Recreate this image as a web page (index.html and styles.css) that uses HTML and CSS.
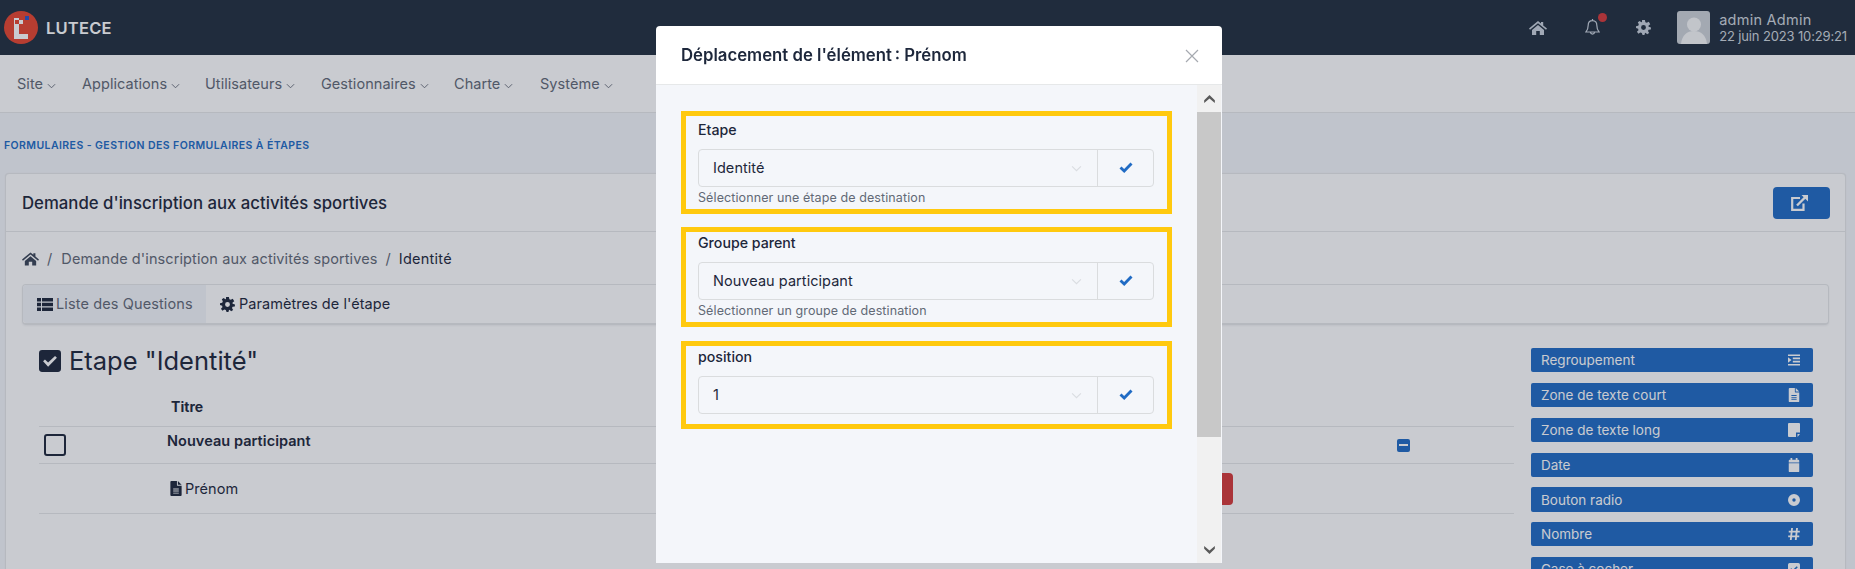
FILE: index.html
```html
<!DOCTYPE html>
<html lang="fr">
<head>
<meta charset="utf-8">
<title>Lutece</title>
<link rel="stylesheet" href="styles.css">
</head>
<body>
<svg class="defs" width="0" height="0" aria-hidden="true">
  <symbol id="i-home" viewBox="0 0 18 14"><path d="M9 0 L12 2.5 V1 H14.2 V4.4 L18 7.6 L17 8.8 L9 2.2 L1 8.8 L0 7.6 Z M3 9 L9 4 L15 9 V14 H10.8 V10 H7.2 V14 H3 Z" fill="currentColor"/></symbol>
  <symbol id="i-gear" viewBox="0 0 16 16"><path fill-rule="evenodd" d="M6.5 0 H9.5 L10 2.3 L11.5 3 L13.6 1.9 L15.2 4.4 L13.4 5.9 V7.2 L16 8 L15.8 10.2 L13.4 10.4 L12.8 11.8 L14 13.8 L11.9 15.2 L10.2 13.6 L9.5 14 L9 16 H7 L6.2 13.8 L4.6 13.4 L2.6 14.6 L1 12.5 L2.6 10.8 L2.3 9.4 L0 8.6 V6.6 L2.4 6 L3 4.6 L1.9 2.4 L4 1 L5.6 2.4 L6.3 2.2 Z M8 5.4 A2.6 2.6 0 1 0 8 10.6 A2.6 2.6 0 1 0 8 5.4 Z" fill="currentColor"/></symbol>
  <symbol id="i-bell" viewBox="0 0 16 20"><path d="M8 1 V2.6 M8 2.6 C4.8 2.6 3.4 5 3.4 7.6 C3.4 11.6 2.6 13 1 14.8 H15 C13.4 13 12.6 11.6 12.6 7.6 C12.6 5 11.2 2.6 8 2.6 Z M5.6 15 A2.5 2.8 0 0 0 10.4 15" fill="none" stroke="currentColor" stroke-width="1.3"/></symbol>
  <symbol id="i-ext" viewBox="0 0 18 16"><path d="M9 3 H1.2 V14.8 H12.5 V8.5" fill="none" stroke="currentColor" stroke-width="2.2"/><path d="M6 10.5 L14 2.5" fill="none" stroke="currentColor" stroke-width="2.4"/><path d="M10.5 0 H17 V6.5 Z" fill="currentColor"/></symbol>
  <symbol id="i-list" viewBox="0 0 16 13"><path d="M0 0 H4 V3.6 H0 Z M5 0 H16 V3.6 H5 Z M0 4.7 H4 V8.3 H0 Z M5 4.7 H16 V8.3 H5 Z M0 9.4 H4 V13 H0 Z M5 9.4 H16 V13 H5 Z" fill="currentColor"/></symbol>
  <symbol id="i-file" viewBox="0 0 12 16"><path fill-rule="evenodd" d="M0 1 A1 1 0 0 1 1 0 H7 V4.5 A.5.5 0 0 0 7.5 5 H12 V15 A1 1 0 0 1 11 16 H1 A1 1 0 0 1 0 15 Z M8 0 L12 4 H8 Z M3 8 V9 H9 V8 Z M3 10.2 V11.2 H9 V10.2 Z M3 12.4 V13.4 H9 V12.4 Z" fill="currentColor"/></symbol>
  <symbol id="i-indent" viewBox="0 0 15 14"><path d="M0 0 H15 V2 H0 Z M6 4 H15 V6 H6 Z M6 8 H15 V10 H6 Z M0 12 H15 V14 H0 Z M0 3.6 L4.4 7 L0 10.4 Z" fill="currentColor"/></symbol>
  <symbol id="i-note" viewBox="0 0 12 14"><path d="M1 0 H11 A1 1 0 0 1 12 1 V9.5 H8 V14 H1 A1 1 0 0 1 0 13 V1 A1 1 0 0 1 1 0 Z M9.5 11 H12 L9.5 14 Z" fill="currentColor"/></symbol>
  <symbol id="i-cal" viewBox="0 0 12 16"><path d="M2 0 H4 V2 H8 V0 H10 V2 H11 A1 1 0 0 1 12 3 V5 H0 V3 A1 1 0 0 1 1 2 H2 Z M0 6 H12 V15 A1 1 0 0 1 11 16 H1 A1 1 0 0 1 0 15 Z" fill="currentColor"/></symbol>
  <symbol id="i-dot" viewBox="0 0 14 14"><path fill-rule="evenodd" d="M7 0 A7 7 0 1 1 7 14 A7 7 0 1 1 7 0 Z M7 5 A2 2 0 1 0 7 9 A2 2 0 1 0 7 5 Z" fill="currentColor"/></symbol>
  <symbol id="i-hash" viewBox="0 0 13 14"><path d="M4.4 0.5 L3 13.5 M9.8 0.5 L8.4 13.5 M0.8 4.5 H12.8 M0.2 9.5 H12.2" fill="none" stroke="currentColor" stroke-width="2"/></symbol>
  <symbol id="i-checkbox" viewBox="0 0 14 14"><path fill-rule="evenodd" d="M2 0 H12 A2 2 0 0 1 14 2 V12 A2 2 0 0 1 12 14 H2 A2 2 0 0 1 0 12 V2 A2 2 0 0 1 2 0 Z M5.8 8 L3.8 6 L2.6 7.2 L5.8 10.6 L11.4 5 L10.2 3.8 Z" fill="currentColor"/></symbol>
  <symbol id="i-check" viewBox="0 0 14 11"><path d="M1.5 5.5 L5.2 9 L12.5 1.6" fill="none" stroke="currentColor" stroke-width="2.9"/></symbol>
  <symbol id="i-chev" viewBox="0 0 10 6"><path d="M1 1 L5 5 L9 1" fill="none" stroke="currentColor" stroke-width="1"/></symbol>
  <symbol id="i-arrow" viewBox="0 0 12 9"><path d="M6 0 L12 6 L12 9 L6 4 L0 9 L0 6 Z" fill="currentColor"/></symbol>
</svg>

<div class="page">
  <header class="topbar">
    <div class="brand">
      <svg class="logo" viewBox="0 0 34 33" role="img" aria-label="Logo Lutece">
        <ellipse cx="17" cy="16.5" rx="17" ry="16.5" fill="#e8452f"/>
        <path d="M10 7 H15 V23 H24 V28 H10 Z" fill="#fff"/>
        <rect x="15" y="9" width="4" height="4" fill="#fff"/>
        <rect x="11" y="9" width="4" height="4" fill="#e8452f"/>
        <rect x="21" y="5" width="4" height="4" fill="#2b55c8"/>
      </svg>
      <span class="brand-name">LUTECE</span>
    </div>
    <div class="top-tools">
      <svg class="tool tool-home"><use href="#i-home"/></svg>
      <span class="bell"><svg class="tool tool-bell"><use href="#i-bell"/></svg><i class="bell-dot"></i></span>
      <svg class="tool tool-gear"><use href="#i-gear"/></svg>
      <svg class="avatar" viewBox="0 0 33 33" aria-hidden="true">
        <rect width="33" height="33" rx="3" fill="#ced3d8"/>
        <circle cx="17" cy="13.5" r="7" fill="#f6f7f8"/>
        <path d="M4 33 C5 24 10 20 17 20 C24 20 29 24 30 33 Z" fill="#f6f7f8"/>
      </svg>
      <div class="user">
        <div class="user-name">admin Admin</div>
        <div class="user-date">22 juin 2023 10:29:21</div>
      </div>
    </div>
  </header>

  <nav class="menu">
    <a class="menu-item menu-site">Site <svg class="chev"><use href="#i-chev"/></svg></a>
    <a class="menu-item menu-apps">Applications <svg class="chev"><use href="#i-chev"/></svg></a>
    <a class="menu-item menu-users">Utilisateurs <svg class="chev"><use href="#i-chev"/></svg></a>
    <a class="menu-item menu-admins">Gestionnaires <svg class="chev"><use href="#i-chev"/></svg></a>
    <a class="menu-item menu-chart">Charte <svg class="chev"><use href="#i-chev"/></svg></a>
    <a class="menu-item">Système <svg class="chev"><use href="#i-chev"/></svg></a>
  </nav>

  <div class="pretitle">Formulaires - Gestion des formulaires à étapes</div>

  <section class="card">
    <div class="card-head">
      <h2 class="card-title">Demande d'inscription aux activités sportives</h2>
      <a class="btn-ext"><svg class="ext-icon"><use href="#i-ext"/></svg></a>
    </div>
    <div class="card-body">
      <div class="crumbs">
        <svg class="crumb-home"><use href="#i-home"/></svg>
        <span class="crumb-sep">/</span>
        <span class="crumb-link">Demande d'inscription aux activités sportives</span>
        <span class="crumb-sep">/</span>
        <span class="crumb-current">Identité</span>
      </div>
      <div class="tabs">
        <a class="tab tab-active"><svg class="tab-list"><use href="#i-list"/></svg>Liste des Questions</a>
        <a class="tab"><svg class="tab-gear"><use href="#i-gear"/></svg>Paramètres de l'étape</a>
      </div>
      <div class="columns">
        <div class="main-col">
          <h1 class="step-title"><svg class="step-check"><use href="#i-checkbox"/></svg>Etape "Identité"</h1>
          <div class="qtable">
            <div class="qcell qhead"></div>
            <div class="qcell qhead qhead-title">Titre</div>
            <div class="qcell qhead"></div>
            <div class="qcell qrow1"><span class="square"></span></div>
            <div class="qcell qrow1 group-name">Nouveau participant</div>
            <div class="qcell qrow1"><span class="minus"><i></i></span></div>
            <div class="qcell qrow2"></div>
            <div class="qcell qrow2 qname"><svg class="qfile"><use href="#i-file"/></svg>Prénom</div>
            <div class="qcell qrow2"><span class="btn-red"></span></div>
          </div>
        </div>
        <aside class="palette">
          <a class="pal-btn">Regroupement<svg class="pal-icon"><use href="#i-indent"/></svg></a>
          <a class="pal-btn">Zone de texte court<svg class="pal-icon"><use href="#i-file"/></svg></a>
          <a class="pal-btn">Zone de texte long<svg class="pal-icon"><use href="#i-note"/></svg></a>
          <a class="pal-btn">Date<svg class="pal-icon"><use href="#i-cal"/></svg></a>
          <a class="pal-btn pal-tall">Bouton radio<svg class="pal-icon"><use href="#i-dot"/></svg></a>
          <a class="pal-btn">Nombre<svg class="pal-icon"><use href="#i-hash"/></svg></a>
          <a class="pal-btn">Case à cocher<svg class="pal-icon"><use href="#i-checkbox"/></svg></a>
        </aside>
      </div>
    </div>
  </section>
</div>

<div class="backdrop"></div>

<div class="modal">
  <div class="modal-head">
    <h3 class="modal-title">Déplacement de l'élément&#8239;: Prénom</h3>
    <svg class="close" viewBox="0 0 14 14"><path d="M1 1 L13 13 M13 1 L1 13" stroke="currentColor" stroke-width="1.2" fill="none"/></svg>
  </div>
  <div class="modal-main">
    <div class="modal-body">
      <div class="box box-first">
        <label class="box-label">Etape</label>
        <div class="group">
          <div class="select">Identité<svg class="sel-chev"><use href="#i-chev"/></svg></div>
          <div class="addon"><svg class="addon-check"><use href="#i-check"/></svg></div>
        </div>
        <div class="hint">Sélectionner une étape de destination</div>
      </div>
      <div class="box box-second">
        <label class="box-label">Groupe parent</label>
        <div class="group">
          <div class="select">Nouveau participant<svg class="sel-chev"><use href="#i-chev"/></svg></div>
          <div class="addon"><svg class="addon-check"><use href="#i-check"/></svg></div>
        </div>
        <div class="hint">Sélectionner un groupe de destination</div>
      </div>
      <div class="box box-third">
        <label class="box-label">position</label>
        <div class="group">
          <div class="select">1<svg class="sel-chev"><use href="#i-chev"/></svg></div>
          <div class="addon"><svg class="addon-check"><use href="#i-check"/></svg></div>
        </div>
      </div>
    </div>
    <div class="scrollbar">
      <div class="sb-btn"><svg class="sb-arrow"><use href="#i-arrow"/></svg></div>
      <div class="sb-thumb"></div>
      <div class="sb-track"></div>
      <div class="sb-btn"><svg class="sb-arrow sb-down"><use href="#i-arrow"/></svg></div>
    </div>
  </div>
</div>
</body>
</html>
```

FILE: styles.css
```css
* { box-sizing: border-box; }
html, body { margin: 0; height: 100%; }
body {
  font-family: Inter, "Liberation Sans", sans-serif;
  font-size: 14.5px;
  line-height: 20px;
  letter-spacing: .05px;
  color: #1d273b;
  background: #f4f6fa;
  overflow: hidden;
}
.defs { position: absolute; }
.page { height: 569px; overflow: hidden; }

/* top bar */
.topbar {
  height: 55px;
  background: #222f3e;
  display: flex;
  align-items: center;
  justify-content: space-between;
  padding: 0 8px 0 4px;
  color: #fff;
}
.brand { display: flex; align-items: center; gap: 8px; }
.logo { width: 34px; height: 33px; }
.brand-name { font-weight: 600; font-size: 16.5px; letter-spacing: .2px; color: #fff; }
.top-tools { display: flex; align-items: center; }
.tool { display: block; color: #c9d2dc; }
.tool-home { width: 18px; height: 14px; margin-right: 38px; }
.bell { position: relative; display: block; margin-right: 36px; }
.tool-bell { width: 15px; height: 19px; }
.bell-dot {
  position: absolute;
  top: -5px;
  right: -7px;
  width: 9px;
  height: 9px;
  border-radius: 50%;
  background: #d63939;
}
.tool-gear { width: 15px; height: 15px; margin-right: 26px; }
.avatar { width: 33px; height: 33px; margin-right: 9px; }
.user { color: #cfd6dd; line-height: 17px; font-size: 13px; letter-spacing: -.14px; }
.user-name { font-size: 14.5px; letter-spacing: .25px; }

/* menu */
.menu {
  height: 58px;
  background: #fff;
  border-bottom: 1px solid #e6e8e9;
  display: flex;
  align-items: center;
  padding: 1px 0 0 17px;
  color: #626976;
}
.menu-item { display: flex; align-items: center; white-space: pre; }
.menu-site { width: 65px; }
.menu-apps { width: 123px; }
.menu-users { width: 116px; }
.menu-admins { width: 133px; }
.menu-chart { width: 86px; }
.chev { width: 9px; height: 6px; margin-top: 3px; color: #626976; }

.pretitle {
  height: 60px;
  padding: 23px 0 0 4px;
  font-size: 10.5px;
  line-height: 20px;
  font-weight: 600;
  text-transform: uppercase;
  letter-spacing: .42px;
  color: #206bc4;
}

/* card */
.card {
  margin: 0 9px 0 5px;
  height: 460px;
  background: #fff;
  border: 1px solid #e6e8e9;
  border-radius: 4px;
  box-shadow: 0 0 1px rgba(29, 39, 59, .1);
}
.card-head {
  height: 58px;
  border-bottom: 1px solid #e6e8e9;
  padding: 0 15px 0 16px;
  display: flex;
  align-items: center;
  justify-content: space-between;
}
.card-title { margin: 0; font-size: 16.75px; font-weight: 500; line-height: 24px; letter-spacing: 0; }
.btn-ext {
  width: 57px;
  height: 32px;
  background: #206bc4;
  border-radius: 4px;
  display: flex;
  align-items: center;
  justify-content: center;
  color: #fff;
}
.ext-icon { width: 18px; height: 16px; margin-right: 3px; }
.card-body { padding: 17px 16px 0; }
.crumbs { display: flex; align-items: center; height: 20px; color: #626976; margin-bottom: 15px; letter-spacing: .1px; }
.crumb-home { width: 17px; height: 14px; color: #3a4557; }
.crumb-sep { margin: 0 8px; }
.crumb-link { margin-left: 1px; }
.crumb-current { color: #1d273b; letter-spacing: .25px; }

/* tabs */
.tabs {
  height: 41px;
  border: 1px solid #e6e8e9;
  border-bottom-width: 2px;
  border-radius: 4px;
  display: flex;
  box-shadow: 0 1px 2px rgba(29, 39, 59, .06);
}
.tab {
  display: flex;
  align-items: center;
  padding: 0 14px;
  color: #1d273b;
  white-space: nowrap;
}
.tab-active { background: #f4f6fa; color: #626976; width: 183px; border-radius: 4px 0 0 4px; letter-spacing: .12px; }
.tab-list { width: 16px; height: 13px; margin-right: 3px; color: #1d273b; flex: none; }
.tab-gear { width: 15px; height: 15px; margin-right: 4px; flex: none; }

.columns { display: flex; padding: 0 0 0 17px; }
.main-col { width: 1475px; }
.step-title {
  margin: 21px 0 0;
  height: 30px;
  display: flex;
  align-items: center;
  font-size: 25.5px;
  line-height: 30px;
  font-weight: 400;
  letter-spacing: 0;
}
.step-check { width: 22px; height: 22px; margin-right: 8px; color: #1d273b; flex: none; }

.qtable {
  margin-top: 12px;
  display: grid;
  grid-template-columns: 128px 1012px 1fr;
  grid-template-rows: 39px 37px 50px;
}
.qcell { border-bottom: 1px solid #e6e8e9; display: flex; align-items: center; }
.qhead-title { font-weight: 700; padding-left: 4px; padding-bottom: 1px; font-size: 14px; }
.group-name { font-weight: 600; padding-bottom: 9px; }
.square {
  width: 22px;
  height: 22px;
  border: 2px solid #1d273b;
  border-radius: 3px;
  margin-left: 5px;
}
.minus {
  width: 13px;
  height: 13px;
  margin-left: 218px;
  background: #206bc4;
  border-radius: 2px;
  display: flex;
  align-items: center;
  justify-content: center;
}
.minus i { width: 9px; height: 2px; background: #fff; }
.qname { padding-left: 3px; }
.qfile { width: 12px; height: 15px; margin-right: 3px; flex: none; }
.btn-red { width: 54px; height: 32px; background: #d63939; border-radius: 4px; }

/* palette */
.palette { margin: 23px 0 0 17px; width: 282px; display: flex; flex-direction: column; gap: 11px; }
.pal-btn {
  height: 24px;
  background: #206bc4;
  color: #fff;
  border-radius: 2px;
  display: flex;
  align-items: center;
  justify-content: space-between;
  padding: 0 13px 0 10px;
  font-size: 13.5px;
  letter-spacing: 0;
  flex: none;
}
.pal-tall { height: 25px; margin: -1px 0 -1px; }
.pal-icon { width: 12px; height: 14px; }

/* overlay + modal */
.backdrop { position: fixed; inset: 0; background: rgba(29, 39, 59, .24); }
.modal {
  position: fixed;
  left: 656px;
  top: 26px;
  width: 566px;
  height: 537px;
  background: #fff;
  border-radius: 4px 4px 0 0;
  display: flex;
  flex-direction: column;
  overflow: hidden;
}
.modal-head {
  height: 59px;
  flex: none;
  border-bottom: 1px solid #e6e8e9;
  display: flex;
  align-items: center;
  justify-content: space-between;
  padding: 0 23px 0 25px;
}
.modal-title { margin: 0; font-size: 16.75px; font-weight: 600; line-height: 24px; letter-spacing: 0; }
.close { width: 14px; height: 14px; color: #a6aab0; margin-top: 1px; }
.modal-main { flex: 1; display: flex; background: #f4f6fa; min-height: 0; }
.modal-body { flex: 1; padding: 26px 0 0 25px; }
.box { width: 491px; border: 5px solid #ffc90e; padding: 1px 13px 0 12px; }
.box-first { height: 103px; padding-top: 4px; margin-bottom: 13px; }
.box-second { height: 100px; margin-bottom: 14px; }
.box-third { height: 88px; }
.box-label { display: block; font-size: 14.2px; font-weight: 500; line-height: 20px; margin-bottom: 9px; letter-spacing: 0; }
.group {
  display: flex;
  height: 38px;
  border: 1px solid #dadcde;
  border-radius: 4px;
}
.select {
  flex: 1;
  display: flex;
  align-items: center;
  justify-content: space-between;
  padding: 0 15px 0 14px;
  border-right: 1px solid #dadcde;
}
.sel-chev { width: 11px; height: 7px; color: #dadde1; }
.addon { width: 55px; display: flex; align-items: center; justify-content: center; padding-bottom: 2px; }
.addon-check { width: 14px; height: 11px; color: #206bc4; }
.hint { font-size: 12.5px; line-height: 20px; padding-top: 1px; letter-spacing: .1px; color: #626976; }
.scrollbar { width: 24px; margin-right: 1px; display: flex; flex-direction: column; background: #f1f1f1; flex: none; }
.sb-btn { height: 27px; display: flex; align-items: center; justify-content: center; flex: none; }
.sb-arrow { width: 11px; height: 8px; color: #5a5a5a; }
.sb-down { transform: rotate(180deg); }
.sb-thumb { height: 325px; background: #c8c8c8; flex: none; }
.sb-track { flex: 1; }
```
